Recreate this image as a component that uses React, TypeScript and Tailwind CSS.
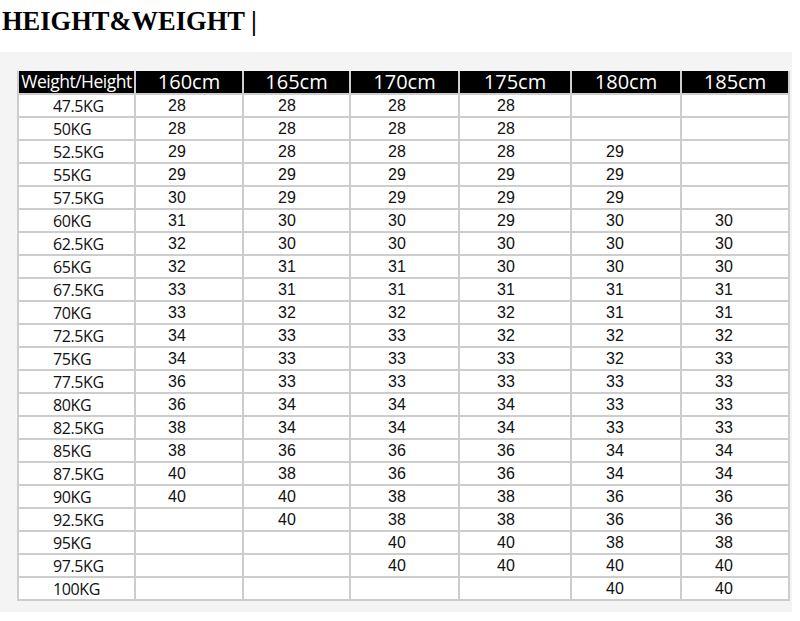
import React from "react";

const heights = ["160cm", "165cm", "170cm", "175cm", "180cm", "185cm"];
const rows: [string, string[]][] = [
  ["47.5KG", ["28", "28", "28", "28", "", ""]],
  ["50KG", ["28", "28", "28", "28", "", ""]],
  ["52.5KG", ["29", "28", "28", "28", "29", ""]],
  ["55KG", ["29", "29", "29", "29", "29", ""]],
  ["57.5KG", ["30", "29", "29", "29", "29", ""]],
  ["60KG", ["31", "30", "30", "29", "30", "30"]],
  ["62.5KG", ["32", "30", "30", "30", "30", "30"]],
  ["65KG", ["32", "31", "31", "30", "30", "30"]],
  ["67.5KG", ["33", "31", "31", "31", "31", "31"]],
  ["70KG", ["33", "32", "32", "32", "31", "31"]],
  ["72.5KG", ["34", "33", "33", "32", "32", "32"]],
  ["75KG", ["34", "33", "33", "33", "32", "33"]],
  ["77.5KG", ["36", "33", "33", "33", "33", "33"]],
  ["80KG", ["36", "34", "34", "34", "33", "33"]],
  ["82.5KG", ["38", "34", "34", "34", "33", "33"]],
  ["85KG", ["38", "36", "36", "36", "34", "34"]],
  ["87.5KG", ["40", "38", "36", "36", "34", "34"]],
  ["90KG", ["40", "40", "38", "38", "36", "36"]],
  ["92.5KG", ["", "40", "38", "38", "36", "36"]],
  ["95KG", ["", "", "40", "40", "38", "38"]],
  ["97.5KG", ["", "", "40", "40", "40", "40"]],
  ["100KG", ["", "", "", "", "40", "40"]],
];

const numPad = ["pl-[32px]", "pl-[34px]", "pl-[37px]", "pl-[37px]", "pl-[34px]", "pl-[33px]"];

export default function App() {
  return (
    <div className="w-[800px] h-[621px] bg-white overflow-hidden">
      <div className="h-[52px] pl-[2px] pt-[4px]">
        <h1 className="font-['Liberation_Serif',serif] text-[26.5px] leading-[34px] font-bold text-black">
          HEIGHT&amp;WEIGHT |
        </h1>
      </div>
      <div className="w-[792px] h-[560px] bg-[#f4f4f4] pt-[19px] pl-[17px]">
        <div className="grid grid-cols-[115px_106px_105px_107px_110px_108px_106px] grid-rows-[22px] auto-rows-[21px] gap-[2px] px-[2px] pb-[2px] w-[773px] bg-[#cdcdcd] font-['Open_Sans',sans-serif]">
          <div className="bg-black text-white flex items-center justify-center text-[17.5px] tracking-[-0.5px] leading-none whitespace-nowrap">
            Weight/Height
          </div>
          {heights.map((h) => (
            <div
              key={h}
              className="bg-black text-white flex items-center justify-center text-[20px] leading-none"
            >
              {h}
            </div>
          ))}
          {rows.map(([w, vals]) => (
            <React.Fragment key={w}>
              <div className="bg-white flex items-center pl-[34px] text-[16px] tracking-[-0.4px] text-[#111]">
                {w}
              </div>
              {vals.map((v, i) => (
                <div
                  key={i}
                  className={`bg-white flex items-center font-['Liberation_Sans',Arial,sans-serif] text-[16px] text-[#111] ${numPad[i]}`}
                >
                  {v}
                </div>
              ))}
            </React.Fragment>
          ))}
        </div>
      </div>
    </div>
  );
}
